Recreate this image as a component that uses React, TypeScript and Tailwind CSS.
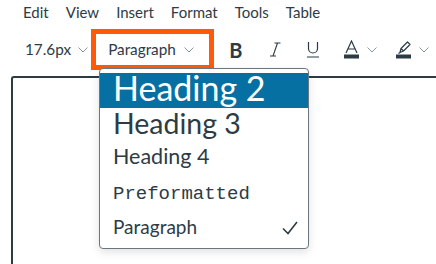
function Chevron() {
  return (
    <svg width="10" height="6" viewBox="0 0 10 6" fill="none" stroke="#8b969e" strokeWidth="1">
      <path d="M0.5 0.5l4.5 4.5 4.5-4.5" />
    </svg>
  );
}

const menus = ['Edit', 'View', 'Insert', 'Format', 'Tools', 'Table'];

const blocks = [
  { label: 'Heading 2', cls: 'h-[35px] leading-[30px] text-[34px] bg-[#0770a3] text-white' },
  { label: 'Heading 3', cls: 'h-[32px] leading-[30px] text-[28.5px]' },
  { label: 'Heading 4', cls: 'h-[33px] leading-[33px] text-[21.5px]' },
  { label: 'Preformatted', cls: 'h-[38px] pt-[4px] leading-[34px] text-[19px] font-["Liberation_Mono",monospace]' },
  { label: 'Paragraph', cls: 'h-[36px] leading-[31px] text-[19px]', checked: true },
];

export default function App() {
  return (
    <div className="relative flex h-[264px] w-[436px] flex-col overflow-hidden bg-white font-['Lato',sans-serif] text-[#2d3b45]">
      {/* menu bar */}
      <div className="flex h-[29px] gap-[17px] pl-[23px] pt-[4px] text-[15px] leading-[17px]">
        {menus.map(m => (
          <span key={m}>{m}</span>
        ))}
      </div>

      {/* toolbar */}
      <div className="flex h-[41px] items-center text-[15.3px]">
        <div className="flex items-center gap-[7px] pl-[25px]">
          <span>17.6px</span>
          <Chevron />
        </div>
        <div className="ml-[3px] flex h-[41px] w-[123px] items-center gap-[8px] border-[5px] border-[#ff5a0a] pl-[12px]">
          <span>Paragraph</span>
          <Chevron />
        </div>
        <span className="ml-[15px] w-[14px] text-[20px] font-bold leading-none">B</span>
        <svg className="ml-[26px]" width="13" height="15" viewBox="0 0 13 15" fill="none" stroke="#2d3b45" strokeWidth="1.1">
          <path d="M5.5 1h6M1 14h6M8.5 1L4 14" />
        </svg>
        <svg className="ml-[24px]" width="14" height="17" viewBox="0 0 14 17" fill="none" stroke="#2d3b45" strokeWidth="1.2">
          <path d="M2.5 1v6.5a4.5 4.5 0 009 0V1M1 16h12" />
        </svg>
        <div className="ml-[24px] flex items-center gap-[8px]">
          <svg width="15" height="19" viewBox="0 0 15 19" fill="none">
            <path d="M2 13L7.5 1 13 13M4.2 9h6.6" stroke="#2d3b45" strokeWidth="1.2" />
            <rect x="0" y="14.5" width="15" height="4" fill="#2d3b45" />
          </svg>
          <Chevron />
        </div>
        <div className="ml-[19px] flex items-center gap-[8px]">
          <svg width="15" height="19" viewBox="0 0 15 19" fill="none">
            <path d="M4 12.5l1-4L11.5 2l2.5 2.5L7.5 11z M5 8.5l2.5 2.5 M4 12.5l-1.5 1" stroke="#2d3b45" strokeWidth="1.2" strokeLinejoin="round" />
            <rect x="0" y="14.5" width="15" height="4" fill="#2d3b45" />
          </svg>
          <Chevron />
        </div>
      </div>

      {/* editor area */}
      <div className="ml-[11px] mt-[6px] flex-1 rounded-tl-[3px] border-l-2 border-t-2 border-[#2d3b45]" />

      {/* block format dropdown */}
      <div className="absolute left-[99px] top-[68px] w-[210px] rounded-[4px] border border-[#6b7780] bg-white pb-[1px] pt-[4px] shadow-[0_3px_8px_rgba(0,0,0,0.12)]">
        {blocks.map(b => (
          <div key={b.label} className={`flex items-start justify-between whitespace-nowrap pl-[13px] pr-[10px] ${b.cls}`}>
            <span>{b.label}</span>
            {b.checked && (
              <svg className="mt-[10px]" width="16" height="14" viewBox="0 0 16 14" fill="none" stroke="#2d3b45" strokeWidth="1.6">
                <path d="M1 7.5l5 5L15 1" />
              </svg>
            )}
          </div>
        ))}
      </div>
    </div>
  );
}
